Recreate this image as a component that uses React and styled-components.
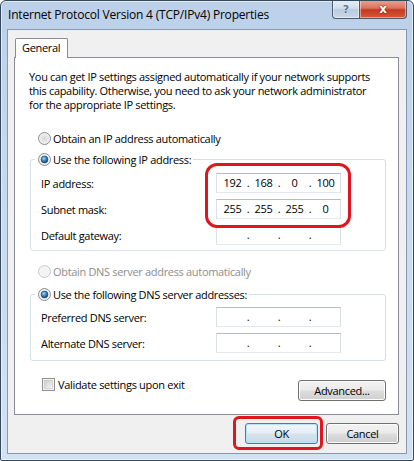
import React from "react";
import styled, { createGlobalStyle } from "styled-components";

const GlobalStyle = createGlobalStyle`
  html, body {
    margin: 0;
    padding: 0;
    background: #ffffff;
  }
  body {
    font-family: "Open Sans", "Noto Sans", sans-serif;
    font-size: 11px;
    letter-spacing: -0.32px;
    color: #000;
  }
`;

const Window = styled.div`
  width: 414px;
  height: 461px;
  box-sizing: border-box;
  border: 1px solid #34485e;
  border-radius: 6px 6px 2px 2px;
  background: linear-gradient(180deg, #bcd1e9 0%, #c8daee 45%, #d3e2f2 100%);
  box-shadow: inset 0 0 0 1px rgba(255, 255, 255, 0.55);
  display: flex;
  flex-direction: column;
  overflow: hidden;
`;

const TitleBar = styled.div`
  height: 28px;
  display: flex;
  align-items: flex-start;
  padding: 0 6px 0 7px;
`;

const Title = styled.div`
  flex: 1;
  line-height: 27px;
  font-size: 12px;
  letter-spacing: -0.2px;
  white-space: nowrap;
`;

const CaptionButtons = styled.div`
  display: flex;
  margin-top: -1px;
`;

const CaptionButton = styled.div`
  width: ${(p) => p.$width}px;
  height: 19px;
  box-sizing: border-box;
  border: 1px solid #4a5a6e;
  border-top: none;
  display: flex;
  align-items: center;
  justify-content: center;
  font-family: "DejaVu Sans", sans-serif;
  font-weight: bold;
  letter-spacing: 0;
  font-size: ${(p) => (p.$close ? "12px" : "11px")};
  color: ${(p) => (p.$close ? "#ffffff" : "#5e7590")};
  text-shadow: ${(p) =>
    p.$close ? "0 0 2px #7a1a10, 0 0 1px #7a1a10" : "0 0 1px #ffffff"};
  border-radius: ${(p) => (p.$close ? "0 0 4px 0" : "0 0 0 4px")};
  border-left: ${(p) => (p.$close ? "none" : "1px solid #4a5a6e")};
  background: ${(p) =>
    p.$close
      ? "linear-gradient(180deg, #e8a597 0%, #d9735e 45%, #c4391f 55%, #d45a3c 100%)"
      : "linear-gradient(180deg, #e6eef7 0%, #d2deeb 45%, #b9cbe0 55%, #c9d9ea 100%)"};
  box-shadow: inset 0 0 0 1px rgba(255, 255, 255, 0.45);
`;

const Client = styled.div`
  flex: 1;
  margin: 0 6px 6px 6px;
  border: 1px solid #8699b0;
  background: #f0f0f0;
  padding: 8px 7px 0 6px;
  display: flex;
  flex-direction: column;
`;

const TabStrip = styled.div`
  height: 19px;
  display: flex;
  padding-left: 1px;
`;

const Tab = styled.div`
  position: relative;
  z-index: 1;
  width: 53px;
  height: 20px;
  box-sizing: border-box;
  border: 1px solid #898c95;
  border-bottom: none;
  border-radius: 2px 2px 0 0;
  background: #ffffff;
  padding-left: 6px;
  line-height: 18px;
`;

const Panel = styled.div`
  border: 1px solid #898c95;
  background: #ffffff;
  padding: 12px 12px 13px 14px;
  display: flex;
  flex-direction: column;
`;

const Description = styled.div`
  line-height: 14px;
  white-space: nowrap;
`;

const OptionRow = styled.div`
  height: 16px;
  display: flex;
  align-items: center;
  gap: 2px;
  margin-top: ${(p) => p.$top || 0}px;
  padding-left: 9px;
  color: ${(p) => (p.$disabled ? "#8d8d8d" : "#000")};
  white-space: nowrap;
`;

const GroupBox = styled.fieldset`
  margin: ${(p) => p.$top}px 0 0 1px;
  padding: 0 0 ${(p) => p.$bottom}px 4px;
  border: 1px solid #d5dfe5;
  border-radius: 3px;
  min-inline-size: 0;
`;

const Legend = styled.legend`
  padding: 0 2px 0 3px;
  height: 16px;
  display: flex;
  align-items: center;
  gap: 2px;
  white-space: nowrap;
`;

const Fields = styled.div`
  position: relative;
  display: grid;
  grid-template-columns: 175px 125px;
  grid-auto-rows: 20px;
  row-gap: 6px;
  padding: ${(p) => p.$top}px 0 0 6px;
  align-items: center;
`;

const FieldLabel = styled.div`
  white-space: nowrap;
`;

const AddressBox = styled.div`
  height: 20px;
  box-sizing: border-box;
  border: 1px solid;
  border-color: #b8bcc4 #dbdfe6 #e3e9ef #dbdfe6;
  background: #ffffff;
  padding-left: 3px;
  display: grid;
  grid-template-columns: 25px 6px 25px 6px 25px 6px 25px;
  align-items: center;
  line-height: 18px;
`;

const Octet = styled.span`
  text-align: center;
`;

const Dot = styled.span`
  text-align: center;
`;

const Highlight = styled.div`
  position: absolute;
  left: ${(p) => p.$left}px;
  top: ${(p) => p.$top}px;
  width: ${(p) => p.$width}px;
  height: ${(p) => p.$height}px;
  box-sizing: border-box;
  border: 3px solid #e0161f;
  border-radius: ${(p) => p.$radius}px;
  pointer-events: none;
`;

const FooterRow = styled.div`
  margin-top: 16px;
  display: flex;
  justify-content: space-between;
  align-items: flex-start;
`;

const CheckRow = styled.label`
  height: 15px;
  margin-left: 13px;
  display: flex;
  align-items: center;
  gap: 3px;
  white-space: nowrap;
`;

const Button = styled.div`
  position: relative;
  width: ${(p) => p.$width}px;
  height: 21px;
  margin-top: ${(p) => p.$top || 0}px;
  box-sizing: border-box;
  border: 1px solid ${(p) => (p.$default ? "#3c7fb1" : "#707070")};
  border-radius: 3px;
  background: ${(p) =>
    p.$default
      ? "linear-gradient(180deg, #f0f6fa 0%, #e6eef4 48%, #d6e3ed 52%, #c9d9e6 100%)"
      : "linear-gradient(180deg, #f2f2f2 0%, #ebebeb 48%, #dddddd 52%, #cfcfcf 100%)"};
  box-shadow: inset 0 0 0 1px ${(p) => (p.$default ? "#b9e3f8" : "#fcfcfc")};
  display: flex;
  align-items: center;
  justify-content: center;
  line-height: 1;
  white-space: nowrap;
`;

const DialogButtons = styled.div`
  margin-top: 8px;
  display: flex;
  justify-content: flex-end;
  gap: 8px;
`;

const Radio = ({ checked, disabled }) => (
  <svg width="13" height="13" viewBox="0 0 13 13">
    <defs>
      <radialGradient id="rbg" cx="0.5" cy="0.5" r="0.6">
        <stop offset="0" stopColor="#d6d6d6" />
        <stop offset="0.7" stopColor="#f0f0f0" />
        <stop offset="1" stopColor="#ffffff" />
      </radialGradient>
      <radialGradient id="rdot" cx="0.4" cy="0.35" r="0.7">
        <stop offset="0" stopColor="#a8dcf6" />
        <stop offset="0.5" stopColor="#3b84c0" />
        <stop offset="1" stopColor="#0d3768" />
      </radialGradient>
    </defs>
    <circle
      cx="6.5"
      cy="6.5"
      r="6"
      fill={disabled ? "#f4f4f4" : "url(#rbg)"}
      stroke={disabled ? "#c8c8c8" : "#8b8c8d"}
    />
    {checked && <circle cx="6.5" cy="6.5" r="3.4" fill="url(#rdot)" stroke="#1f3e60" strokeWidth="0.6" />}
  </svg>
);

const Checkbox = () => (
  <svg width="13" height="13" viewBox="0 0 13 13">
    <defs>
      <linearGradient id="cbg" x1="0" y1="0" x2="1" y2="1">
        <stop offset="0" stopColor="#cbcbcb" />
        <stop offset="1" stopColor="#f7f7f7" />
      </linearGradient>
    </defs>
    <rect x="0.5" y="0.5" width="12" height="12" fill="#f4f4f4" stroke="#8e8f8f" />
    <rect x="2.5" y="2.5" width="8" height="8" fill="url(#cbg)" stroke="#c2c2c2" strokeWidth="0.6" />
  </svg>
);

const Address = ({ parts }) => (
  <AddressBox>
    <Octet>{parts[0]}</Octet>
    <Dot>.</Dot>
    <Octet>{parts[1]}</Octet>
    <Dot>.</Dot>
    <Octet>{parts[2]}</Octet>
    <Dot>.</Dot>
    <Octet>{parts[3]}</Octet>
  </AddressBox>
);

const empty = ["", "", "", ""];

const App = () => {
  return (
    <>
      <GlobalStyle />
      <Window>
        <TitleBar>
          <Title>Internet Protocol Version 4 (TCP/IPv4) Properties</Title>
          <CaptionButtons>
            <CaptionButton $width={28}>?</CaptionButton>
            <CaptionButton $width={47} $close>
              x
            </CaptionButton>
          </CaptionButtons>
        </TitleBar>
        <Client>
          <TabStrip>
            <Tab>General</Tab>
          </TabStrip>
          <Panel>
            <Description>
              You can get IP settings assigned automatically if your network supports
              <br />
              this capability. Otherwise, you need to ask your network administrator
              <br />
              for the appropriate IP settings.
            </Description>

            <OptionRow $top={18}>
              <Radio />
              <span>Obtain an IP address automatically</span>
            </OptionRow>

            <GroupBox $top={5} $bottom={5}>
              <Legend>
                <Radio checked />
                <span>Use the following IP address:</span>
              </Legend>
              <Fields $top={6}>
                <FieldLabel>IP address:</FieldLabel>
                <Address parts={["192", "168", "0", "100"]} />
                <FieldLabel>Subnet mask:</FieldLabel>
                <Address parts={["255", "255", "255", "0"]} />
                <FieldLabel>Default gateway:</FieldLabel>
                <Address parts={empty} />
                <Highlight $left={170} $top={-4} $width={146} $height={65} $radius={12} />
              </Fields>
            </GroupBox>

            <OptionRow $top={12} $disabled>
              <Radio disabled />
              <span>Obtain DNS server address automatically</span>
            </OptionRow>

            <GroupBox $top={7} $bottom={7}>
              <Legend>
                <Radio checked />
                <span>Use the following DNS server addresses:</span>
              </Legend>
              <Fields $top={5}>
                <FieldLabel>Preferred DNS server:</FieldLabel>
                <Address parts={empty} />
                <FieldLabel>Alternate DNS server:</FieldLabel>
                <Address parts={empty} />
              </Fields>
            </GroupBox>

            <FooterRow>
              <CheckRow>
                <Checkbox />
                <span>Validate settings upon exit</span>
              </CheckRow>
              <Button $width={88} $top={3}>
                Advanced...
              </Button>
            </FooterRow>
          </Panel>
          <DialogButtons>
            <Button $width={73} $default>
              OK
              <Highlight $left={-13} $top={-8} $width={90} $height={34} $radius={6} />
            </Button>
            <Button $width={73}>Cancel</Button>
          </DialogButtons>
        </Client>
      </Window>
    </>
  );
};

export default App;
